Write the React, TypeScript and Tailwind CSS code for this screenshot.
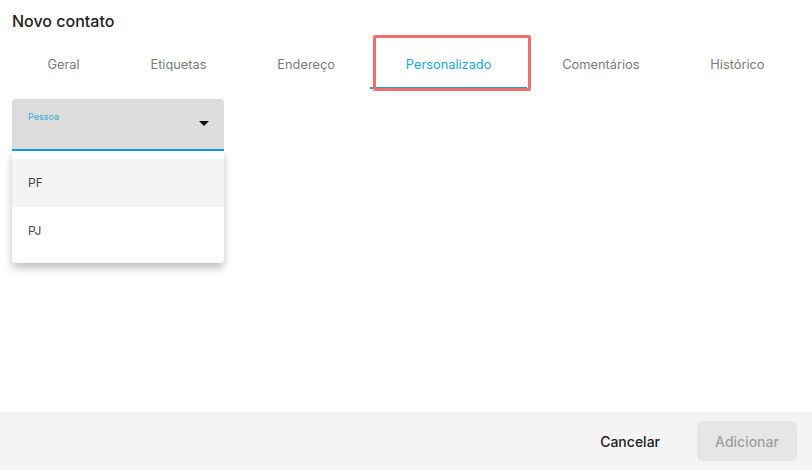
import { useState } from 'react';

const tabs = ['Geral', 'Etiquetas', 'Endereço', 'Personalizado', 'Comentários', 'Histórico'];

export default function App() {
  const [active] = useState(3);

  return (
    <div className="w-[812px] h-[470px] bg-white flex flex-col font-['Inter',sans-serif] overflow-hidden">
      <div className="flex-1 flex flex-col">
        <h1 className="px-3 pt-[11px] text-[16px] font-medium text-[#222] leading-5">Novo contato</h1>

        <div className="flex px-3 mt-[4px]">
          {tabs.map((t, i) => (
            <div key={t} className="flex-auto relative h-[55px] pt-[4px] flex items-center justify-center">
              <span className={`text-[12.8px] ${i === active ? 'text-[#1aa7de]' : 'text-[#7a7a7a]'}`}>{t}</span>
              {i === active && (
                <>
                  <div className="absolute left-0 right-0 bottom-[1px] h-[2px] bg-[#0aa3db]" />
                  <div className="absolute left-[3px] -right-[4px] top-0 -bottom-[1px] border-[3px] border-[#f26d6d] rounded-[2px]" />
                </>
              )}
            </div>
          ))}
        </div>

        <div className="px-3 mt-[9px] relative w-[236px]">
          <div className="h-[52px] bg-[#dcdcdc] rounded-t-[4px] border-b-2 border-[#08a2d6] relative">
            <span className="absolute left-4 top-[11px] text-[9px] text-[#2badde]">Pessoa</span>
            <svg className="absolute right-[15px] top-[22px]" width="10" height="5" viewBox="0 0 10 5">
              <path d="M0 0 L10 0 L5 5 Z" fill="#111" />
            </svg>
          </div>
          <div className="bg-white rounded-b-[4px] shadow-[0_5px_8px_rgba(0,0,0,0.25)] py-2">
            <div className="h-12 flex items-center px-4 bg-[#f4f4f4] text-[12px] text-[#444]">PF</div>
            <div className="h-12 flex items-center px-4 text-[12px] text-[#444]">PJ</div>
          </div>
        </div>
      </div>

      <div className="h-[58px] bg-[#f4f4f4] flex items-center justify-end gap-2 px-[15px]">
        <button className="h-10 px-[29px] text-[14px] font-medium text-[#222]">Cancelar</button>
        <button className="h-10 w-[100px] rounded-[6px] bg-[#e6e6e6] text-[14px] font-medium text-[#a0a0a0]">Adicionar</button>
      </div>
    </div>
  );
}
